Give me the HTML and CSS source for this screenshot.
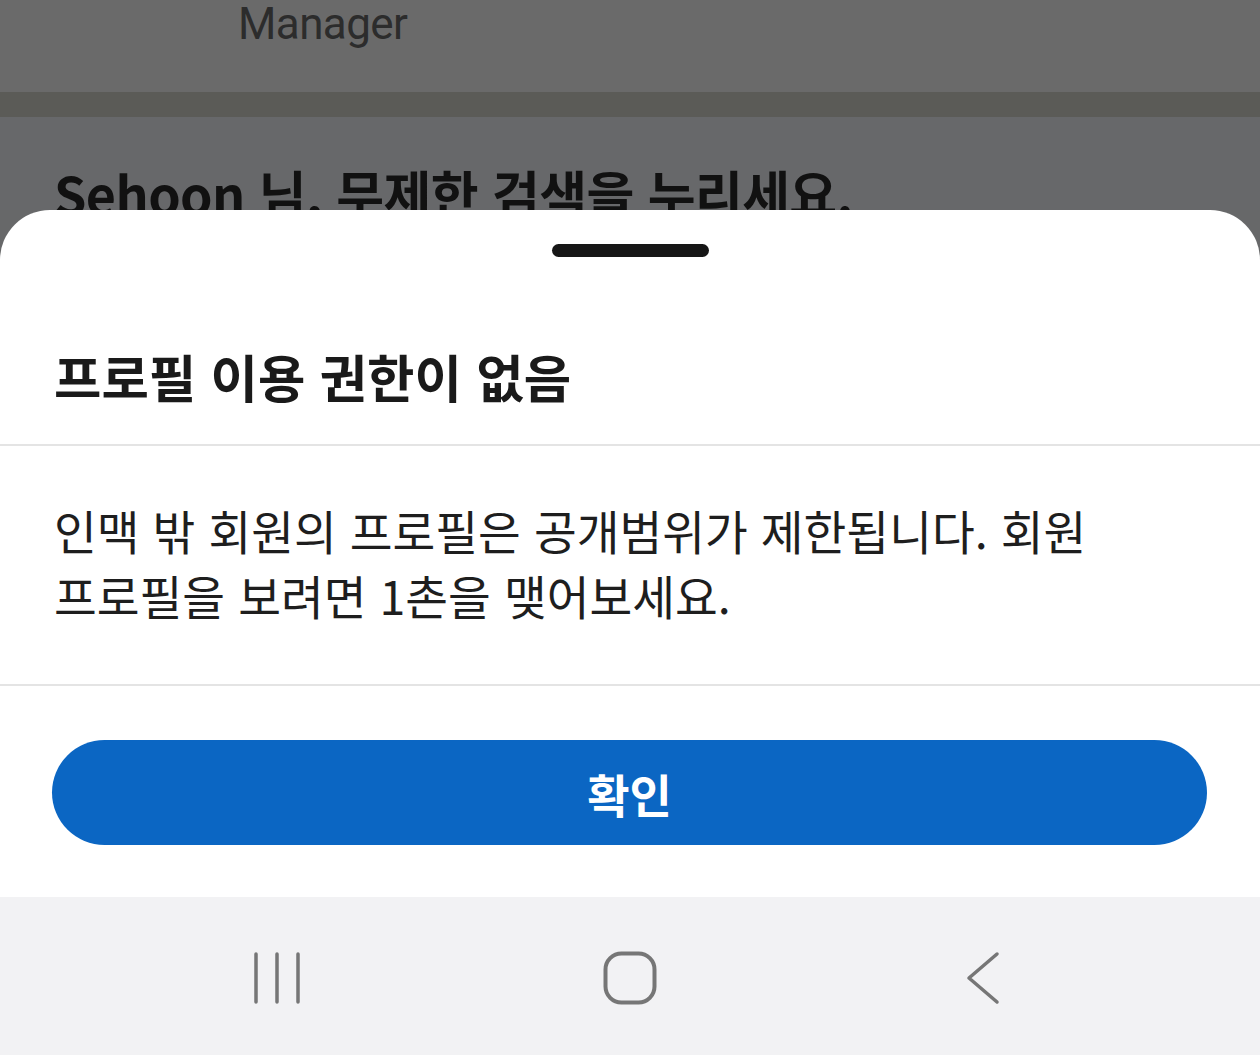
FILE: index.html
```html
<!DOCTYPE html>
<html lang="ko">
<head>
    <meta charset="UTF-8">
    <meta name="viewport" content="width=device-width, initial-scale=1.0">
    <title>프로필 이용 권한이 없음</title>
    <link rel="stylesheet" href="styles.css">
</head>
<body>
    <div class="screen">
        <!-- dimmed page behind the sheet -->
        <div class="backdrop">
            <div class="job-title">Manager</div>
            <div class="band"></div>
            <div class="promo">Sehoon 님, 무제한 검색을 누리세요.</div>
        </div>

        <div class="sheet">
            <div class="handle"></div>
            <h2 class="sheet-title">프로필 이용 권한이 없음</h2>
            <p class="sheet-body">인맥 밖 회원의 프로필은 공개범위가 제한됩니다. 회원 프로필을 보려면 1촌을 맺어보세요.</p>
            <div class="sheet-actions">
                <button class="confirm-button">확인</button>
            </div>
        </div>

        <div class="navbar">
            <div class="nav-item">
                <svg width="50" height="52" viewBox="0 0 50 52">
                    <path d="M4 2v48M25 2v48M46 2v48" stroke="#767676" stroke-width="3.5" stroke-linecap="round" fill="none"/>
                </svg>
            </div>
            <div class="nav-item">
                <svg width="54" height="54" viewBox="0 0 54 54">
                    <rect x="2.5" y="2.5" width="49" height="49" rx="16" stroke="#767676" stroke-width="4" fill="none"/>
                </svg>
            </div>
            <div class="nav-item">
                <svg width="36" height="54" viewBox="0 0 36 54">
                    <path d="M32 3L4 27l28 24" stroke="#767676" stroke-width="3.5" stroke-linecap="round" stroke-linejoin="round" fill="none"/>
                </svg>
            </div>
        </div>
    </div>
</body>
</html>
```

FILE: styles.css
```css
body {
    margin: 0;
    font-family: "Noto Sans CJK KR", "Noto Sans", sans-serif;
    background-color: #676869;
}
.screen {
    width: 1260px;
    height: 1055px;
    overflow: hidden;
    display: flex;
    flex-direction: column;
}
.backdrop {
    height: 210px;
    flex-shrink: 0;
    overflow: hidden;
    background: #6a6a6a;
}
.job-title {
    height: 92px;
    padding: 2px 0 0 238px;
    box-sizing: border-box;
    font-family: Roboto, "Liberation Sans", sans-serif;
    font-size: 44px;
    line-height: 44px;
    color: #2c2c2c;
    letter-spacing: -0.6px;
}
.band {
    height: 25px;
    background: #5b5b57;
}
.promo {
    background: #67686a;
    height: 93px;
    padding: 41px 0 0 54px;
    box-sizing: border-box;
    font-size: 52px;
    font-weight: 700;
    line-height: 70px;
    letter-spacing: -0.6px;
    color: #111;
    white-space: nowrap;
}
.sheet {
    background: white;
    border-radius: 50px 50px 0 0;
    padding-top: 34px;
    display: flex;
    flex-direction: column;
}
.handle {
    width: 157px;
    height: 13px;
    margin: 0 auto;
    border-radius: 7px;
    background: #161616;
}
.sheet-title {
    margin: 89px 0 0;
    padding: 0 54px 38px;
    font-size: 51.5px;
    font-weight: 700;
    line-height: 60px;
    color: #1a1a1a;
    border-bottom: 2px solid #e4e4e4;
}
.sheet-body {
    margin: 0;
    padding: 51px 54px 57px;
    font-size: 46.5px;
    line-height: 65px;
    color: #1e1e1e;
    word-break: keep-all;
    border-bottom: 2px solid #e4e4e4;
}
.sheet-actions {
    padding: 54px 53px 52px 52px;
}
.confirm-button {
    display: block;
    width: 100%;
    height: 105px;
    border: none;
    border-radius: 53px;
    background-color: #0b66c3;
    color: white;
    font-family: "Noto Sans CJK KR", sans-serif;
    font-size: 46px;
    font-weight: 700;
    cursor: pointer;
}
.navbar {
    flex: 1;
    background: #f2f2f4;
    display: flex;
    justify-content: center;
    align-items: center;
    gap: 253px;
    padding-top: 4px;
}
.nav-item {
    width: 100px;
    display: flex;
    justify-content: center;
    align-items: center;
}
```
